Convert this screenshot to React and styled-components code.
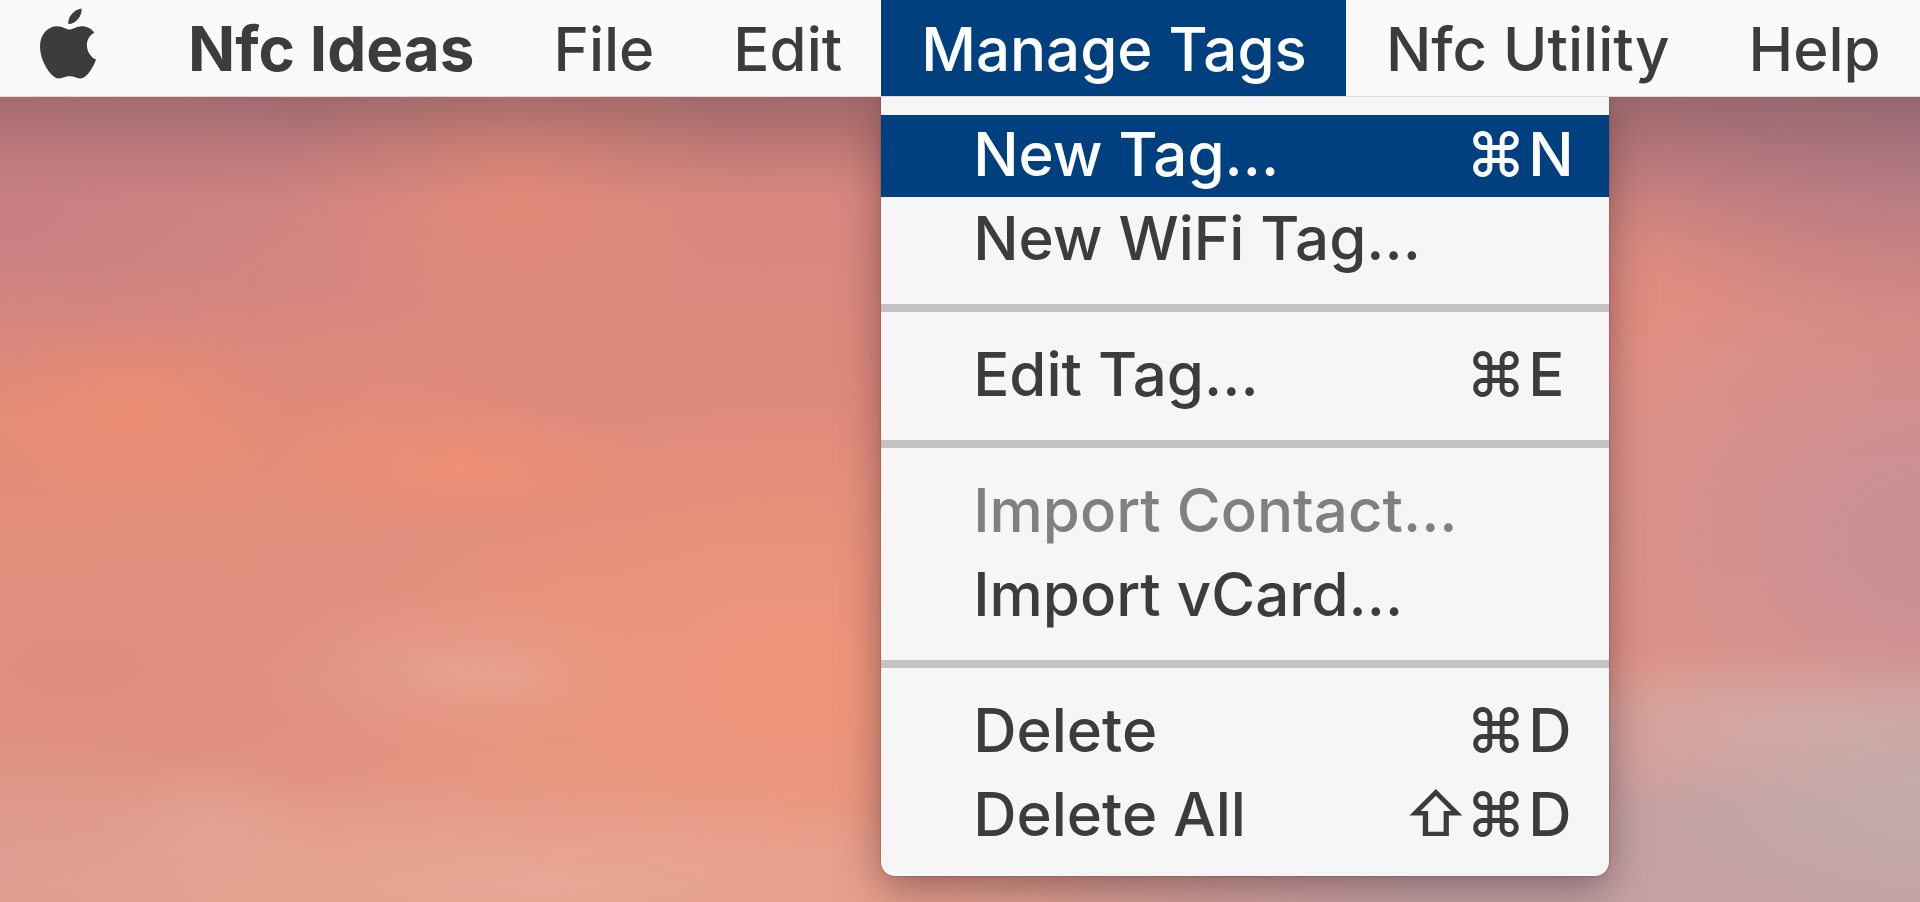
import React from "react";
import styled, { createGlobalStyle } from "styled-components";

const GlobalStyle = createGlobalStyle`
  *, *::before, *::after { box-sizing: border-box; }
  body { margin: 0; font-family: Inter, "Liberation Sans", sans-serif; color: #3c3c3c; }
`;

const Desktop = styled.div`
  min-height: 100vh;
  overflow: hidden;
  background:
    linear-gradient(to bottom, rgba(80, 60, 66, 0.3) 96px, rgba(80, 60, 66, 0.1) 150px, rgba(80, 60, 66, 0) 200px),
    radial-gradient(ellipse 8% 11% at 7% 46%, rgba(248, 144, 112, 0.5), rgba(248, 144, 112, 0.2) 50%, rgba(248, 144, 112, 0)),
    radial-gradient(ellipse 10% 7% at 24% 52%, rgba(250, 146, 114, 0.6), rgba(250, 146, 114, 0.25) 50%, rgba(250, 146, 114, 0)),
    radial-gradient(ellipse 12% 18% at 27% 20%, rgba(232, 140, 118, 0.7), rgba(232, 140, 118, 0.3) 50%, rgba(232, 140, 118, 0)),
    radial-gradient(ellipse 5% 4% at 26% 75%, rgba(234, 176, 156, 0.3), rgba(234, 176, 156, 0)),
    radial-gradient(ellipse 11% 9% at 23% 74%, rgba(230, 168, 152, 0.5), rgba(230, 168, 152, 0.2) 50%, rgba(230, 168, 152, 0)),
    radial-gradient(ellipse 6% 7% at 11% 91%, rgba(226, 168, 152, 0.5), rgba(226, 168, 152, 0)),
    radial-gradient(ellipse 34% 12% at 28% 98%, rgba(232, 168, 152, 0.9), rgba(232, 168, 152, 0)),
    radial-gradient(ellipse 18% 16% at 0% 96%, rgba(220, 156, 144, 0.95), rgba(220, 156, 144, 0)),
    radial-gradient(ellipse 24% 32% at 42% 76%, rgba(240, 150, 122, 0.9), rgba(240, 150, 122, 0)),
    radial-gradient(ellipse 24% 24% at 4% 74%, rgba(222, 140, 124, 0.8), rgba(222, 140, 124, 0)),
    radial-gradient(ellipse 30% 18% at 0% 47%, rgba(230, 142, 118, 0.75), rgba(230, 142, 118, 0)),
    radial-gradient(ellipse 26% 34% at 0% 22%, rgba(198, 126, 132, 0.9), rgba(198, 126, 132, 0)),
    radial-gradient(ellipse 34% 14% at 20% 10%, rgba(184, 120, 128, 0.8), rgba(184, 120, 128, 0)),
    radial-gradient(ellipse 22% 10% at 44% 10%, rgba(190, 114, 114, 0.6), rgba(190, 114, 114, 0)),
    radial-gradient(ellipse 14% 14% at 101% 88%, rgba(192, 176, 174, 0.75), rgba(192, 176, 174, 0)),
    radial-gradient(ellipse 20% 9% at 93% 80%, rgba(212, 170, 166, 0.85), rgba(212, 170, 166, 0)),
    radial-gradient(ellipse 46% 26% at 92% 100%, rgba(198, 162, 166, 1) 40%, rgba(198, 162, 166, 0)),
    radial-gradient(ellipse 22% 34% at 101% 60%, rgba(203, 144, 150, 1) 20%, rgba(203, 144, 150, 0)),
    radial-gradient(ellipse 22% 24% at 102% 14%, rgba(178, 122, 134, 1) 10%, rgba(178, 122, 134, 0)),
    radial-gradient(ellipse 24% 20% at 92% 8%, rgba(180, 116, 124, 0.9), rgba(180, 116, 124, 0)),
    radial-gradient(ellipse 18% 34% at 84% 50%, rgba(229, 147, 132, 0.9), rgba(229, 147, 132, 0)),
    linear-gradient(to bottom, #d6877f 20%, #df8b7c 45%, #e3917f 65%, #e39a86 100%);
`;

const MenuBar = styled.nav`
  position: relative;
  display: flex;
  height: 97px;
  background: #fafafa;
  border-bottom: 1px solid #dcdcdc;
`;

const AppleButton = styled.button`
  display: flex;
  align-items: center;
  padding: 0 52px 8px 40px;
  border: 0;
  background: none;
  color: #3c3c3c;
`;

const MenuSlot = styled.div`
  position: relative;
  display: flex;
`;

const MenuTitle = styled.button`
  padding: 2px 39px 0 40px;
  border: 0;
  background: ${(p) => (p.$open ? "#00407f" : "none")};
  color: ${(p) => (p.$open ? "#fff" : "#3c3c3c")};
  font: ${(p) => (p.$bold ? "700 62px" : "500 60px")}/94px Inter, "Liberation Sans", sans-serif;
  white-space: nowrap;
`;

const Menu = styled.div`
  position: absolute;
  top: 97px;
  left: 0;
  display: flex;
  flex-direction: column;
  gap: 2px;
  width: 728px;
  padding: 18px 0 19px;
  border-radius: 0 0 14px 14px;
  background: #f6f6f6;
  box-shadow: 0 12px 40px rgba(70, 40, 50, 0.5), 0 0 2px rgba(60, 20, 30, 0.5);
  clip-path: inset(0 -80px -80px -80px);
`;

const Divider = styled.hr`
  width: 100%;
  height: 8px;
  margin: 21px 0;
  border: 0;
  background: #c3c3c3;
`;

const MenuItem = styled.button`
  display: flex;
  align-items: center;
  justify-content: space-between;
  height: 82px;
  padding: 0 33px 4px 92px;
  border: 0;
  background: ${(p) => (p.$selected ? "#00407f" : "none")};
  color: ${(p) => (p.$selected ? "#fff" : "#3c3c3c")};
  font: 500 60px/78px Inter, "Liberation Sans", sans-serif;
  text-align: left;
  white-space: nowrap;

  &:disabled { color: #808080; }
`;

const Shortcut = styled.span`
  display: flex;
`;

const Key = styled.span`
  width: ${(p) => (p.$letter ? 48 : 62)}px;
`;

const groups = [
  [
    { label: "New Tag...", keys: "⌘N", selected: true },
    { label: "New WiFi Tag..." },
  ],
  [{ label: "Edit Tag...", keys: "⌘E" }],
  [{ label: "Import Contact...", disabled: true }, { label: "Import vCard..." }],
  [
    { label: "Delete", keys: "⌘D" },
    { label: "Delete All", keys: "⇧⌘D" },
  ],
];

function AppleLogo() {
  return (
    <svg width="56" height="72" viewBox="0 0 56 72" fill="currentColor" aria-hidden="true">
      <path d="M41.500 0.500C42.300 8 36 16 28.300 16C27.500 9 34 1.500 41.500 0.500Z" />
      <path d="M29.500 21.500C32.500 21.500 36.500 18.200 42 18.200C47 18.200 51.500 20.500 54.300 24.500C49.500 27.500 46.800 32 46.900 37.200C47 43.500 50.500 49 56 51.600C54 57.500 50.500 63.500 47 67C44.500 69.500 42.500 70.500 40 70.500C36.500 70.500 34.500 68.300 29.800 68.300C25 68.300 22.600 70.500 19 70.500C16 70.500 13.500 69 10.800 65.800C4.500 58.500 0 48 0 38.500C0 26 8 18.200 17 18.200C22.500 18.200 26.500 21.500 29.500 21.500Z" />
    </svg>
  );
}

function ManageTagsMenu() {
  return (
    <Menu role="menu" aria-label="Manage Tags">
      {groups.map((items, index) => (
        <React.Fragment key={index}>
          {index > 0 && <Divider />}
          {items.map((item) => (
            <MenuItem
              key={item.label}
              type="button"
              role="menuitem"
              disabled={item.disabled}
              $selected={item.selected}
            >
              <span>{item.label}</span>
              {item.keys && (
                <Shortcut>
                  {[...item.keys].map((key) => (
                    <Key key={key} $letter={/[A-Z]/.test(key)}>{key}</Key>
                  ))}
                </Shortcut>
              )}
            </MenuItem>
          ))}
        </React.Fragment>
      ))}
    </Menu>
  );
}

export default function App() {
  return (
    <Desktop>
      <GlobalStyle />
      <MenuBar aria-label="Menu bar">
        <AppleButton type="button" aria-label="Apple menu"><AppleLogo /></AppleButton>
        <MenuTitle type="button" $bold>Nfc Ideas</MenuTitle>
        <MenuTitle type="button">File</MenuTitle>
        <MenuTitle type="button">Edit</MenuTitle>
        <MenuSlot>
          <MenuTitle type="button" $open aria-expanded="true">Manage Tags</MenuTitle>
          <ManageTagsMenu />
        </MenuSlot>
        <MenuTitle type="button">Nfc Utility</MenuTitle>
        <MenuTitle type="button">Help</MenuTitle>
      </MenuBar>
    </Desktop>
  );
}
